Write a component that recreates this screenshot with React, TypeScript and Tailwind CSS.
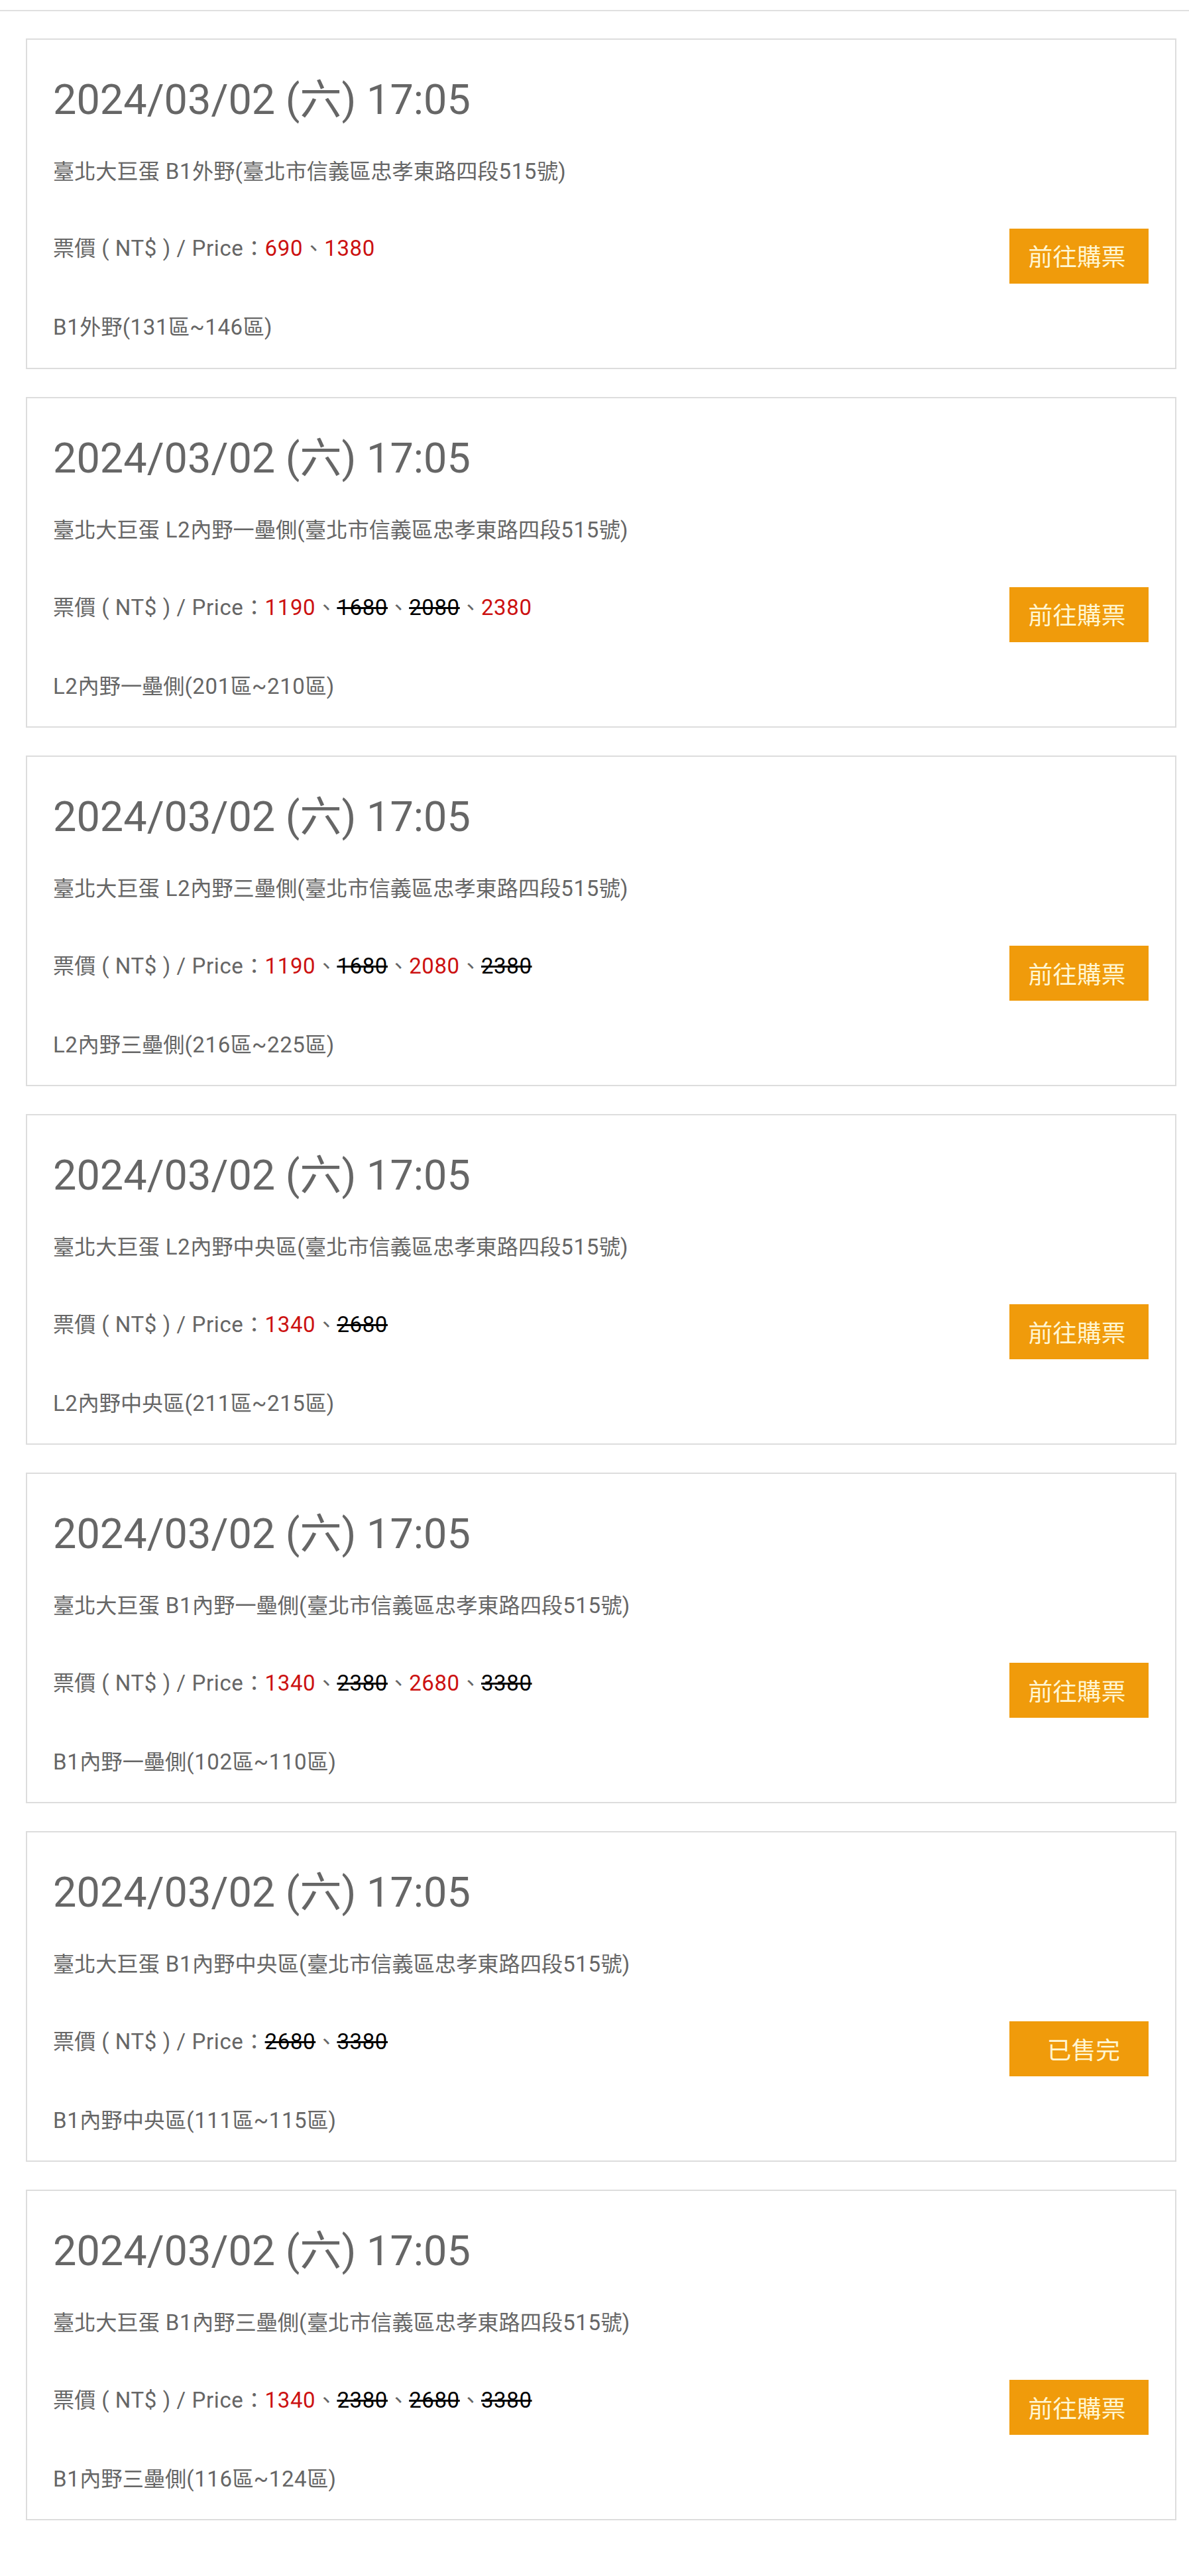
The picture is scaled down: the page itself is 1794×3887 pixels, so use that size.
import React from "react";

type Price = { v: string; ok: boolean };
type Item = { area: string; zone: string; prices: Price[]; soldOut?: boolean };

const items: Item[] = [
  {
    area: "B1外野",
    zone: "B1外野(131區~146區)",
    prices: [
      { v: "690", ok: true },
      { v: "1380", ok: true },
    ],
  },
  {
    area: "L2內野一壘側",
    zone: "L2內野一壘側(201區~210區)",
    prices: [
      { v: "1190", ok: true },
      { v: "1680", ok: false },
      { v: "2080", ok: false },
      { v: "2380", ok: true },
    ],
  },
  {
    area: "L2內野三壘側",
    zone: "L2內野三壘側(216區~225區)",
    prices: [
      { v: "1190", ok: true },
      { v: "1680", ok: false },
      { v: "2080", ok: true },
      { v: "2380", ok: false },
    ],
  },
  {
    area: "L2內野中央區",
    zone: "L2內野中央區(211區~215區)",
    prices: [
      { v: "1340", ok: true },
      { v: "2680", ok: false },
    ],
  },
  {
    area: "B1內野一壘側",
    zone: "B1內野一壘側(102區~110區)",
    prices: [
      { v: "1340", ok: true },
      { v: "2380", ok: false },
      { v: "2680", ok: true },
      { v: "3380", ok: false },
    ],
  },
  {
    area: "B1內野中央區",
    zone: "B1內野中央區(111區~115區)",
    prices: [
      { v: "2680", ok: false },
      { v: "3380", ok: false },
    ],
    soldOut: true,
  },
  {
    area: "B1內野三壘側",
    zone: "B1內野三壘側(116區~124區)",
    prices: [
      { v: "1340", ok: true },
      { v: "2380", ok: false },
      { v: "2680", ok: false },
      { v: "3380", ok: false },
    ],
  },
];

const CJK = /[\u3000-\u303f\u3400-\u9fff\uff00-\uffef]/;
const CJK_SPLIT = /([\u3000-\u303f\u3400-\u9fff\uff00-\uffef]+)/;

// Latin runs render a little wider than the CJK runs in the reference.
function Mixed({ text }: { text: string }) {
  const parts = text.split(CJK_SPLIT);
  return (
    <>
      {parts.map((p, i) =>
        p === "" ? null : CJK.test(p) ? (
          <span key={i}>{p}</span>
        ) : (
          <span key={i} className="text-[33px] leading-[47.25px] tracking-[0.6px]">
            {p}
          </span>
        )
      )}
    </>
  );
}

function Card({ item, first }: { item: Item; first: boolean }) {
  return (
    <div
      className={
        (first ? "mt-[41px] " : "mt-[42.4px] ") +
        "border-2 border-[#dddddd] bg-white pl-[39px] pr-[40px] pt-[59px] pb-[37px]"
      }
    >
      <div className="text-[63px] leading-[63px] text-[#666666] whitespace-nowrap">
        2024/03/02 (六) 17:05
      </div>
      <div className="mt-[52.6px] h-[47.25px] text-[32.2px] leading-[47.25px] text-[#666666] whitespace-nowrap">
        <Mixed text={`臺北大巨蛋 ${item.area}(臺北市信義區忠孝東路四段515號)`} />
      </div>
      <div className="mt-[63px] flex items-start justify-between">
        <div className="mt-[6.6px] h-[47.25px] text-[32.2px] leading-[47.25px] text-[#666666] whitespace-nowrap">
          <Mixed text="票價 ( NT$ ) / Price：" />
          {item.prices.map((p, i) => (
            <React.Fragment key={i}>
              {i > 0 && <span>、</span>}
              {p.ok ? (
                <span className="text-[33px] leading-[47.25px] tracking-[0.6px] text-[#cc1111]">{p.v}</span>
              ) : (
                <span className="text-[33px] leading-[47.25px] tracking-[0.6px] text-black line-through">
                  {p.v}
                </span>
              )}
            </React.Fragment>
          ))}
        </div>
        <div
          className={
            "flex h-[83px] w-[210px] shrink-0 items-center justify-center bg-[#f09b0b] pt-[6px] text-[36.75px] leading-[40px] text-[#fff6d2] " +
            (item.soldOut ? "pl-[14px]" : "pr-[6px]")
          }
        >
          {item.soldOut ? "已售完" : "前往購票"}
        </div>
      </div>
      <div className="mt-[42.6px] h-[47.25px] text-[32.2px] leading-[47.25px] text-[#666666] whitespace-nowrap">
        <Mixed text={item.zone} />
      </div>
    </div>
  );
}

export default function App() {
  return (
    <div className="min-h-[3887px] w-full bg-white font-['Roboto','Noto_Sans_CJK_TC',sans-serif]">
      <div className="h-[17px] border-b-2 border-[#e0e0e0]" />
      <div className="pl-[39px] pr-[19px] pb-[80px]">
        {items.map((it, i) => (
          <Card key={i} item={it} first={i === 0} />
        ))}
      </div>
    </div>
  );
}
